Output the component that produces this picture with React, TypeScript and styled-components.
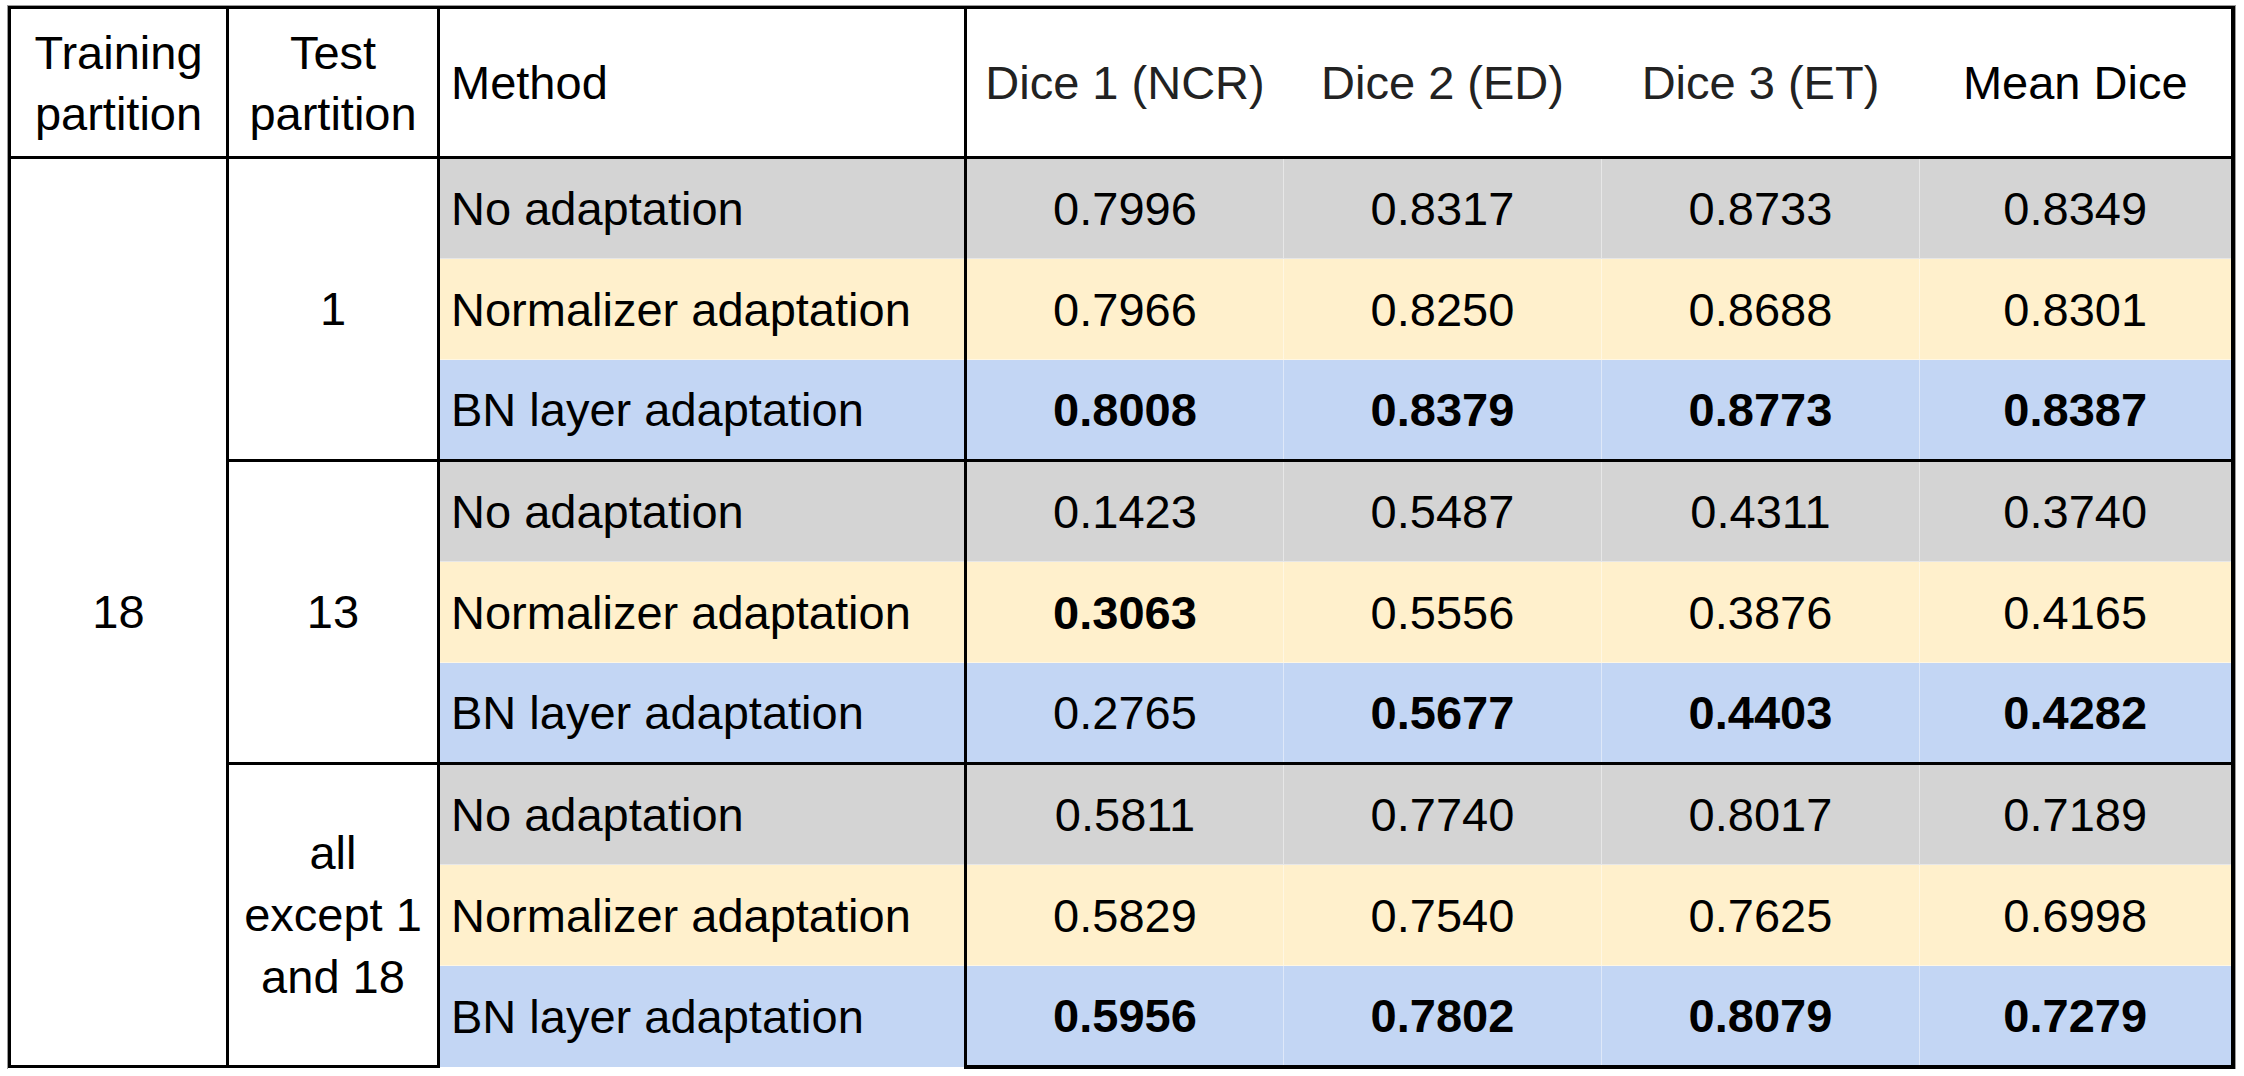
import React from 'react';
import styled, { createGlobalStyle, css } from 'styled-components';

const GlobalStyle = createGlobalStyle`
    html, body {
        margin: 0;
        padding: 0;
        background: #ffffff;
    }
    body {
        font-family: "Liberation Sans", Arial, sans-serif;
    }
`;

const Page = styled.div`
    padding: 6px 0 0 8px;
`;

const Table = styled.table`
    width: 2223px;
    table-layout: fixed;
    border-collapse: collapse;
    outline: 1px solid #9a9a9a;
    outline-offset: 0;
    font-family: "Liberation Sans", Arial, sans-serif;
    font-size: 47px;
    color: #000;
`;

const HeadRow = styled.tr`
    height: 150px;
`;

const BodyRow = styled.tr`
    height: 101px;
`;

const HeadCell = styled.th<{ $align?: 'left' | 'center'; $soft?: boolean; $data?: boolean }>`
    font-weight: 400;
    line-height: 61px;
    text-align: ${(p) => p.$align ?? 'center'};
    padding: ${(p) => (p.$align === 'left' ? '0 0 0 11px' : '0')};
    color: ${(p) => (p.$soft ? '#222' : '#000')};
    vertical-align: middle;
    background: #fff;
    border: 3px solid #000;
    ${(p) =>
        p.$data &&
        css`
            border-left: 1px solid #fff;
            border-right: 1px solid #fff;
        `}
    &:last-child {
        border-right: 4px solid #000;
    }
`;

const GroupCell = styled.td`
    text-align: center;
    vertical-align: middle;
    line-height: 62px;
    background: #fff;
    border: 3px solid #000;
`;

const tones = {
    none: '#d4d4d4',
    norm: '#fff0cc',
    bn: '#c3d6f4',
};

type Tone = keyof typeof tones;

const MethodCell = styled.td<{ $tone: Tone; $first: boolean }>`
    background: ${(p) => tones[p.$tone]};
    padding: 0 0 0 11px;
    white-space: nowrap;
    vertical-align: middle;
    border-left: 3px solid #000;
    border-right: 3px solid #000;
    border-top: ${(p) => (p.$first ? '3px solid #000' : '1px solid rgba(255,255,255,0.45)')};
`;

const ValueCell = styled.td<{ $tone: Tone; $first: boolean; $bold: boolean; $last: boolean }>`
    background: ${(p) => tones[p.$tone]};
    text-align: center;
    vertical-align: middle;
    font-weight: ${(p) => (p.$bold ? 700 : 400)};
    border-left: 1px solid rgba(255,255,255,0.45);
    border-right: ${(p) => (p.$last ? '4px solid #000' : '1px solid rgba(255,255,255,0.45)')};
    border-top: ${(p) => (p.$first ? '3px solid #000' : '1px solid rgba(255,255,255,0.45)')};
    tr:last-child > & {
        border-bottom: 4px solid #000;
    }
`;

type Row = { method: string; tone: Tone; values: [string, boolean][] };
type Group = { test: React.ReactNode; rows: Row[] };

const groups: Group[] = [
    {
        test: '1',
        rows: [
            { method: 'No adaptation', tone: 'none', values: [['0.7996', false], ['0.8317', false], ['0.8733', false], ['0.8349', false]] },
            { method: 'Normalizer adaptation', tone: 'norm', values: [['0.7966', false], ['0.8250', false], ['0.8688', false], ['0.8301', false]] },
            { method: 'BN layer adaptation', tone: 'bn', values: [['0.8008', true], ['0.8379', true], ['0.8773', true], ['0.8387', true]] },
        ],
    },
    {
        test: '13',
        rows: [
            { method: 'No adaptation', tone: 'none', values: [['0.1423', false], ['0.5487', false], ['0.4311', false], ['0.3740', false]] },
            { method: 'Normalizer adaptation', tone: 'norm', values: [['0.3063', true], ['0.5556', false], ['0.3876', false], ['0.4165', false]] },
            { method: 'BN layer adaptation', tone: 'bn', values: [['0.2765', false], ['0.5677', true], ['0.4403', true], ['0.4282', true]] },
        ],
    },
    {
        test: (
            <>
                all
                <br />
                except 1
                <br />
                and 18
            </>
        ),
        rows: [
            { method: 'No adaptation', tone: 'none', values: [['0.5811', false], ['0.7740', false], ['0.8017', false], ['0.7189', false]] },
            { method: 'Normalizer adaptation', tone: 'norm', values: [['0.5829', false], ['0.7540', false], ['0.7625', false], ['0.6998', false]] },
            { method: 'BN layer adaptation', tone: 'bn', values: [['0.5956', true], ['0.7802', true], ['0.8079', true], ['0.7279', true]] },
        ],
    },
];

export default function App() {
    return (
        <Page>
            <GlobalStyle />
            <Table>
                <colgroup>
                    <col style={{ width: 218 }} />
                    <col style={{ width: 211 }} />
                    <col style={{ width: 527 }} />
                    <col style={{ width: 318 }} />
                    <col style={{ width: 318 }} />
                    <col style={{ width: 318 }} />
                    <col style={{ width: 313 }} />
                </colgroup>
                <thead>
                    <HeadRow>
                        <HeadCell>
                            Training
                            <br />
                            partition
                        </HeadCell>
                        <HeadCell>
                            Test
                            <br />
                            partition
                        </HeadCell>
                        <HeadCell $align="left">Method</HeadCell>
                        <HeadCell $data $soft>Dice 1 (NCR)</HeadCell>
                        <HeadCell $data $soft>Dice 2 (ED)</HeadCell>
                        <HeadCell $data $soft>Dice 3 (ET)</HeadCell>
                        <HeadCell $data>Mean Dice</HeadCell>
                    </HeadRow>
                </thead>
                <tbody>
                    {groups.map((g, gi) =>
                        g.rows.map((r, ri) => (
                            <BodyRow key={`${gi}-${ri}`}>
                                {gi === 0 && ri === 0 && <GroupCell rowSpan={9}>18</GroupCell>}
                                {ri === 0 && <GroupCell rowSpan={3}>{g.test}</GroupCell>}
                                <MethodCell $tone={r.tone} $first={ri === 0}>
                                    {r.method}
                                </MethodCell>
                                {r.values.map(([v, b], vi) => (
                                    <ValueCell
                                        key={vi}
                                        $tone={r.tone}
                                        $first={ri === 0}
                                        $bold={b}
                                        $last={vi === r.values.length - 1}
                                    >
                                        {v}
                                    </ValueCell>
                                ))}
                            </BodyRow>
                        ))
                    )}
                </tbody>
            </Table>
        </Page>
    );
}
